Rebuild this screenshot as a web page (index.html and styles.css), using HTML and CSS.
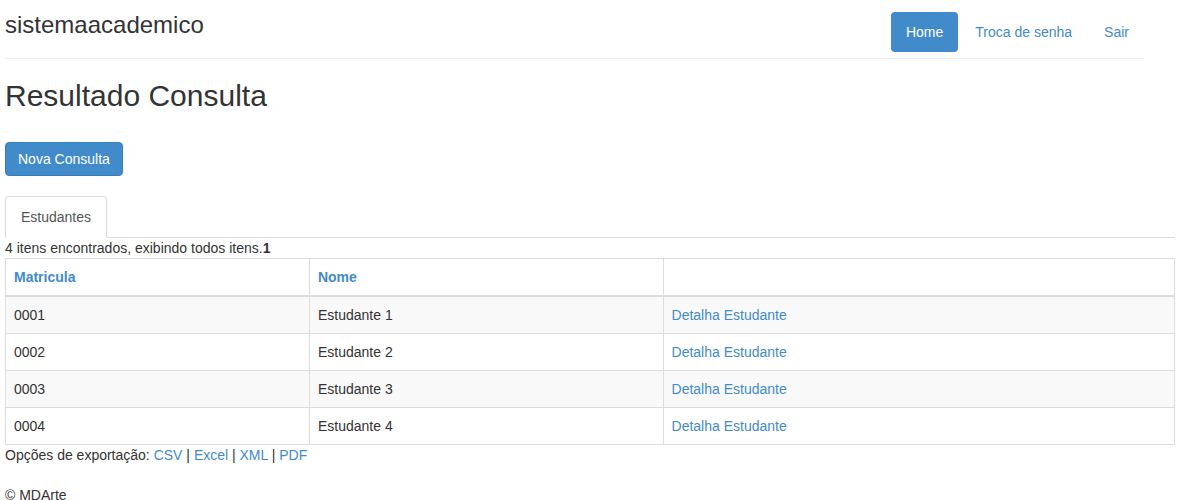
FILE: index.html
```html
<!DOCTYPE html>
<html lang="pt-BR">
<head>
<meta charset="utf-8">
<meta name="viewport" content="width=device-width, initial-scale=1">
<title>sistemaacademico</title>
<link rel="stylesheet" href="styles.css">
</head>
<body>
<header class="header">
  <h3 class="brand">sistemaacademico</h3>
  <nav class="nav">
    <a class="nav-link active" href="#">Home</a>
    <a class="nav-link" href="#">Troca de senha</a>
    <a class="nav-link" href="#">Sair</a>
  </nav>
</header>
<main>
  <h2 class="title">Resultado Consulta</h2>
  <button class="btn" type="button">Nova Consulta</button>
  <div class="tabs"><a class="tab" href="#">Estudantes</a></div>
  <div class="summary">4 itens encontrados, exibindo todos itens.<strong>1</strong></div>
  <table class="table">
    <colgroup><col class="col-id"><col class="col-name"><col></colgroup>
    <thead>
      <tr><th><a href="#">Matricula</a></th><th><a href="#">Nome</a></th><th></th></tr>
    </thead>
    <tbody>
      <tr><td>0001</td><td>Estudante 1</td><td><a href="#">Detalha Estudante</a></td></tr>
      <tr><td>0002</td><td>Estudante 2</td><td><a href="#">Detalha Estudante</a></td></tr>
      <tr><td>0003</td><td>Estudante 3</td><td><a href="#">Detalha Estudante</a></td></tr>
      <tr><td>0004</td><td>Estudante 4</td><td><a href="#">Detalha Estudante</a></td></tr>
    </tbody>
  </table>
  <div class="export">Opções de exportação: <a href="#">CSV</a> | <a href="#">Excel</a> | <a href="#">XML</a> | <a href="#">PDF</a></div>
</main>
<footer class="footer">© MDArte</footer>
</body>
</html>
```

FILE: styles.css
```css
* { box-sizing: border-box; }
html { scrollbar-width: none; }
body {
  margin: 0;
  padding: 0 5px;
  font: 14px/20px "Liberation Sans", Arial, sans-serif;
  color: #333;
  background: #fff;
}
a { color: #428bca; text-decoration: none; }
.header {
  display: flex;
  justify-content: space-between;
  align-items: flex-start;
  margin-right: 31px;
  padding: 12px 0 6px;
  border-bottom: 1px solid #eee;
}
.brand { margin: 0; font-size: 24px; font-weight: 500; line-height: 26px; }
.nav { display: flex; gap: 2px; }
.nav-link { padding: 10px 15px; border-radius: 4px; }
.nav-link.active { color: #fff; background: #428bca; }
.title { margin: 20px 0 30px; font-size: 30px; font-weight: 500; line-height: 33px; }
.btn {
  display: block;
  padding: 6px 12px;
  border: 1px solid #357ebd;
  border-radius: 4px;
  font: inherit;
  color: #fff;
  background: #428bca;
}
.tabs { display: flex; margin-top: 20px; border-bottom: 1px solid #ddd; }
.tab {
  margin-bottom: -1px;
  padding: 10px 15px;
  border: 1px solid #ddd;
  border-bottom-color: #fff;
  border-radius: 4px 4px 0 0;
  color: #555;
  background: #fff;
}
.table { width: 100%; border-collapse: collapse; border: 1px solid #ddd; }
.col-id { width: 26%; }
.col-name { width: 30.25%; }
.table th, .table td { height: 37px; padding: 8px; border: 1px solid #ddd; text-align: left; }
.table th { border-bottom-width: 2px; }
.table tbody tr:nth-child(odd) { background: #f9f9f9; }
.footer { margin-top: 20px; }
```
